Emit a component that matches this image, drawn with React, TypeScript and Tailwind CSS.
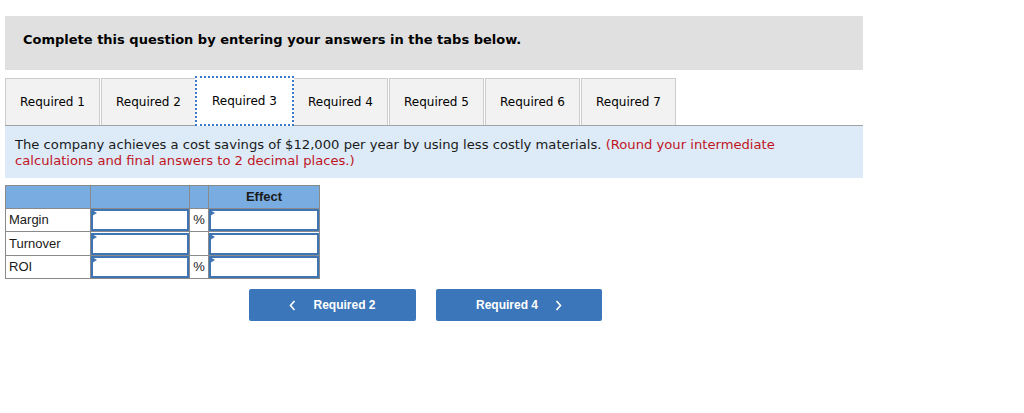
import React from "react";

const tabs = ["Required 1", "Required 2", "Required 3", "Required 4", "Required 5", "Required 6", "Required 7"];

function InputCell() {
  return (
    <td className="p-0 border border-[#8a8a8a] bg-white">
      <div className="relative h-[22px] border-2 border-[#3f74b5] bg-white">
        <div className="absolute -top-[1px] -left-[1px] w-0 h-0 border-t-[3px] border-b-[3px] border-l-[5px] border-t-transparent border-b-transparent border-l-[#3f74b5]" />
      </div>
    </td>
  );
}

export default function App() {
  return (
    <div className="w-[1024px] h-[413px] bg-white pl-[5px] pt-[16px]" style={{ fontFamily: '"DejaVu Sans", Verdana, sans-serif' }}>
      <div className="w-[858px] h-[54px] bg-[#e0e0e0] pl-[18px] pb-[7px] flex items-center">
        <span className="text-[13px] font-bold text-black">Complete this question by entering your answers in the tabs below.</span>
      </div>

      <div className="w-[858px] mt-[8px] flex items-end gap-[1px] border-b border-[#a3a3a3] h-[48px]">
        {tabs.map((t, i) =>
          i === 2 ? (
            <div
              key={t}
              className="w-[99px] h-[50px] -mb-[1px] -mx-[2px] border-2 border-dotted border-[#3a78c8] bg-white flex items-center justify-center text-[12px] text-black relative z-10"
            >
              {t}
            </div>
          ) : (
            <div
              key={t}
              className="w-[95px] h-[47px] border border-b-0 border-[#cccccc] bg-[#f2f2f2] flex items-center justify-center text-[12px] text-black"
            >
              {t}
            </div>
          )
        )}
      </div>

      <div className="w-[858px] h-[52px] bg-[#dcebf7] pl-[10px] pt-[11px] pr-[70px] text-[13.15px] leading-[16px] text-[#1a1a1a]">
        The company achieves a cost savings of $12,000 per year by using less costly materials.{" "}
        <span className="text-[#c0151f]">(Round your intermediate calculations and final answers to 2 decimal places.)</span>
      </div>

      <table
        className="mt-[7px] border-collapse text-[13px] text-[#1a1a1a]"
        style={{ fontFamily: '"Liberation Sans", Arial, sans-serif' }}
      >
        <colgroup>
          <col className="w-[85px]" />
          <col className="w-[99px]" />
          <col className="w-[19px]" />
          <col className="w-[111px]" />
        </colgroup>
        <tbody>
          <tr className="h-[23px] bg-[#79ace1]">
            <td className="border border-[#8a8a8a]" />
            <td className="border border-[#8a8a8a]" />
            <td className="border border-[#8a8a8a]" />
            <td className="border border-[#8a8a8a] text-center font-bold text-[13px] align-middle">Effect</td>
          </tr>
          <tr className="h-[23px]">
            <td className="border border-[#8a8a8a] pl-[3px] bg-white">Margin</td>
            <InputCell />
            <td className="border border-[#8a8a8a] text-center bg-white">%</td>
            <InputCell />
          </tr>
          <tr className="h-[24px]">
            <td className="border border-[#8a8a8a] pl-[3px] bg-white">Turnover</td>
            <InputCell />
            <td className="border border-[#8a8a8a] bg-white" />
            <InputCell />
          </tr>
          <tr className="h-[23px]">
            <td className="border border-[#8a8a8a] pl-[3px] bg-white">ROI</td>
            <InputCell />
            <td className="border border-[#8a8a8a] text-center bg-white">%</td>
            <InputCell />
          </tr>
        </tbody>
      </table>

      <div
        className="mt-[10px] ml-[244px] flex gap-[20px] text-[12px] font-bold text-white"
        style={{ fontFamily: '"Liberation Sans", Arial, sans-serif' }}
      >
        <div className="w-[167px] h-[32px] bg-[#3a76b9] rounded-[2px] flex items-center justify-center gap-[17px]">
          <svg width="7" height="11" viewBox="0 0 7 11" fill="none">
            <path d="M5.5 1 L1.5 5.5 L5.5 10" stroke="white" strokeWidth="1.6" />
          </svg>
          <span>Required 2</span>
        </div>
        <div className="w-[166px] h-[32px] bg-[#3a76b9] rounded-[2px] flex items-center justify-center gap-[17px]">
          <span>Required 4</span>
          <svg width="7" height="11" viewBox="0 0 7 11" fill="none">
            <path d="M1.5 1 L5.5 5.5 L1.5 10" stroke="white" strokeWidth="1.6" />
          </svg>
        </div>
      </div>
    </div>
  );
}
